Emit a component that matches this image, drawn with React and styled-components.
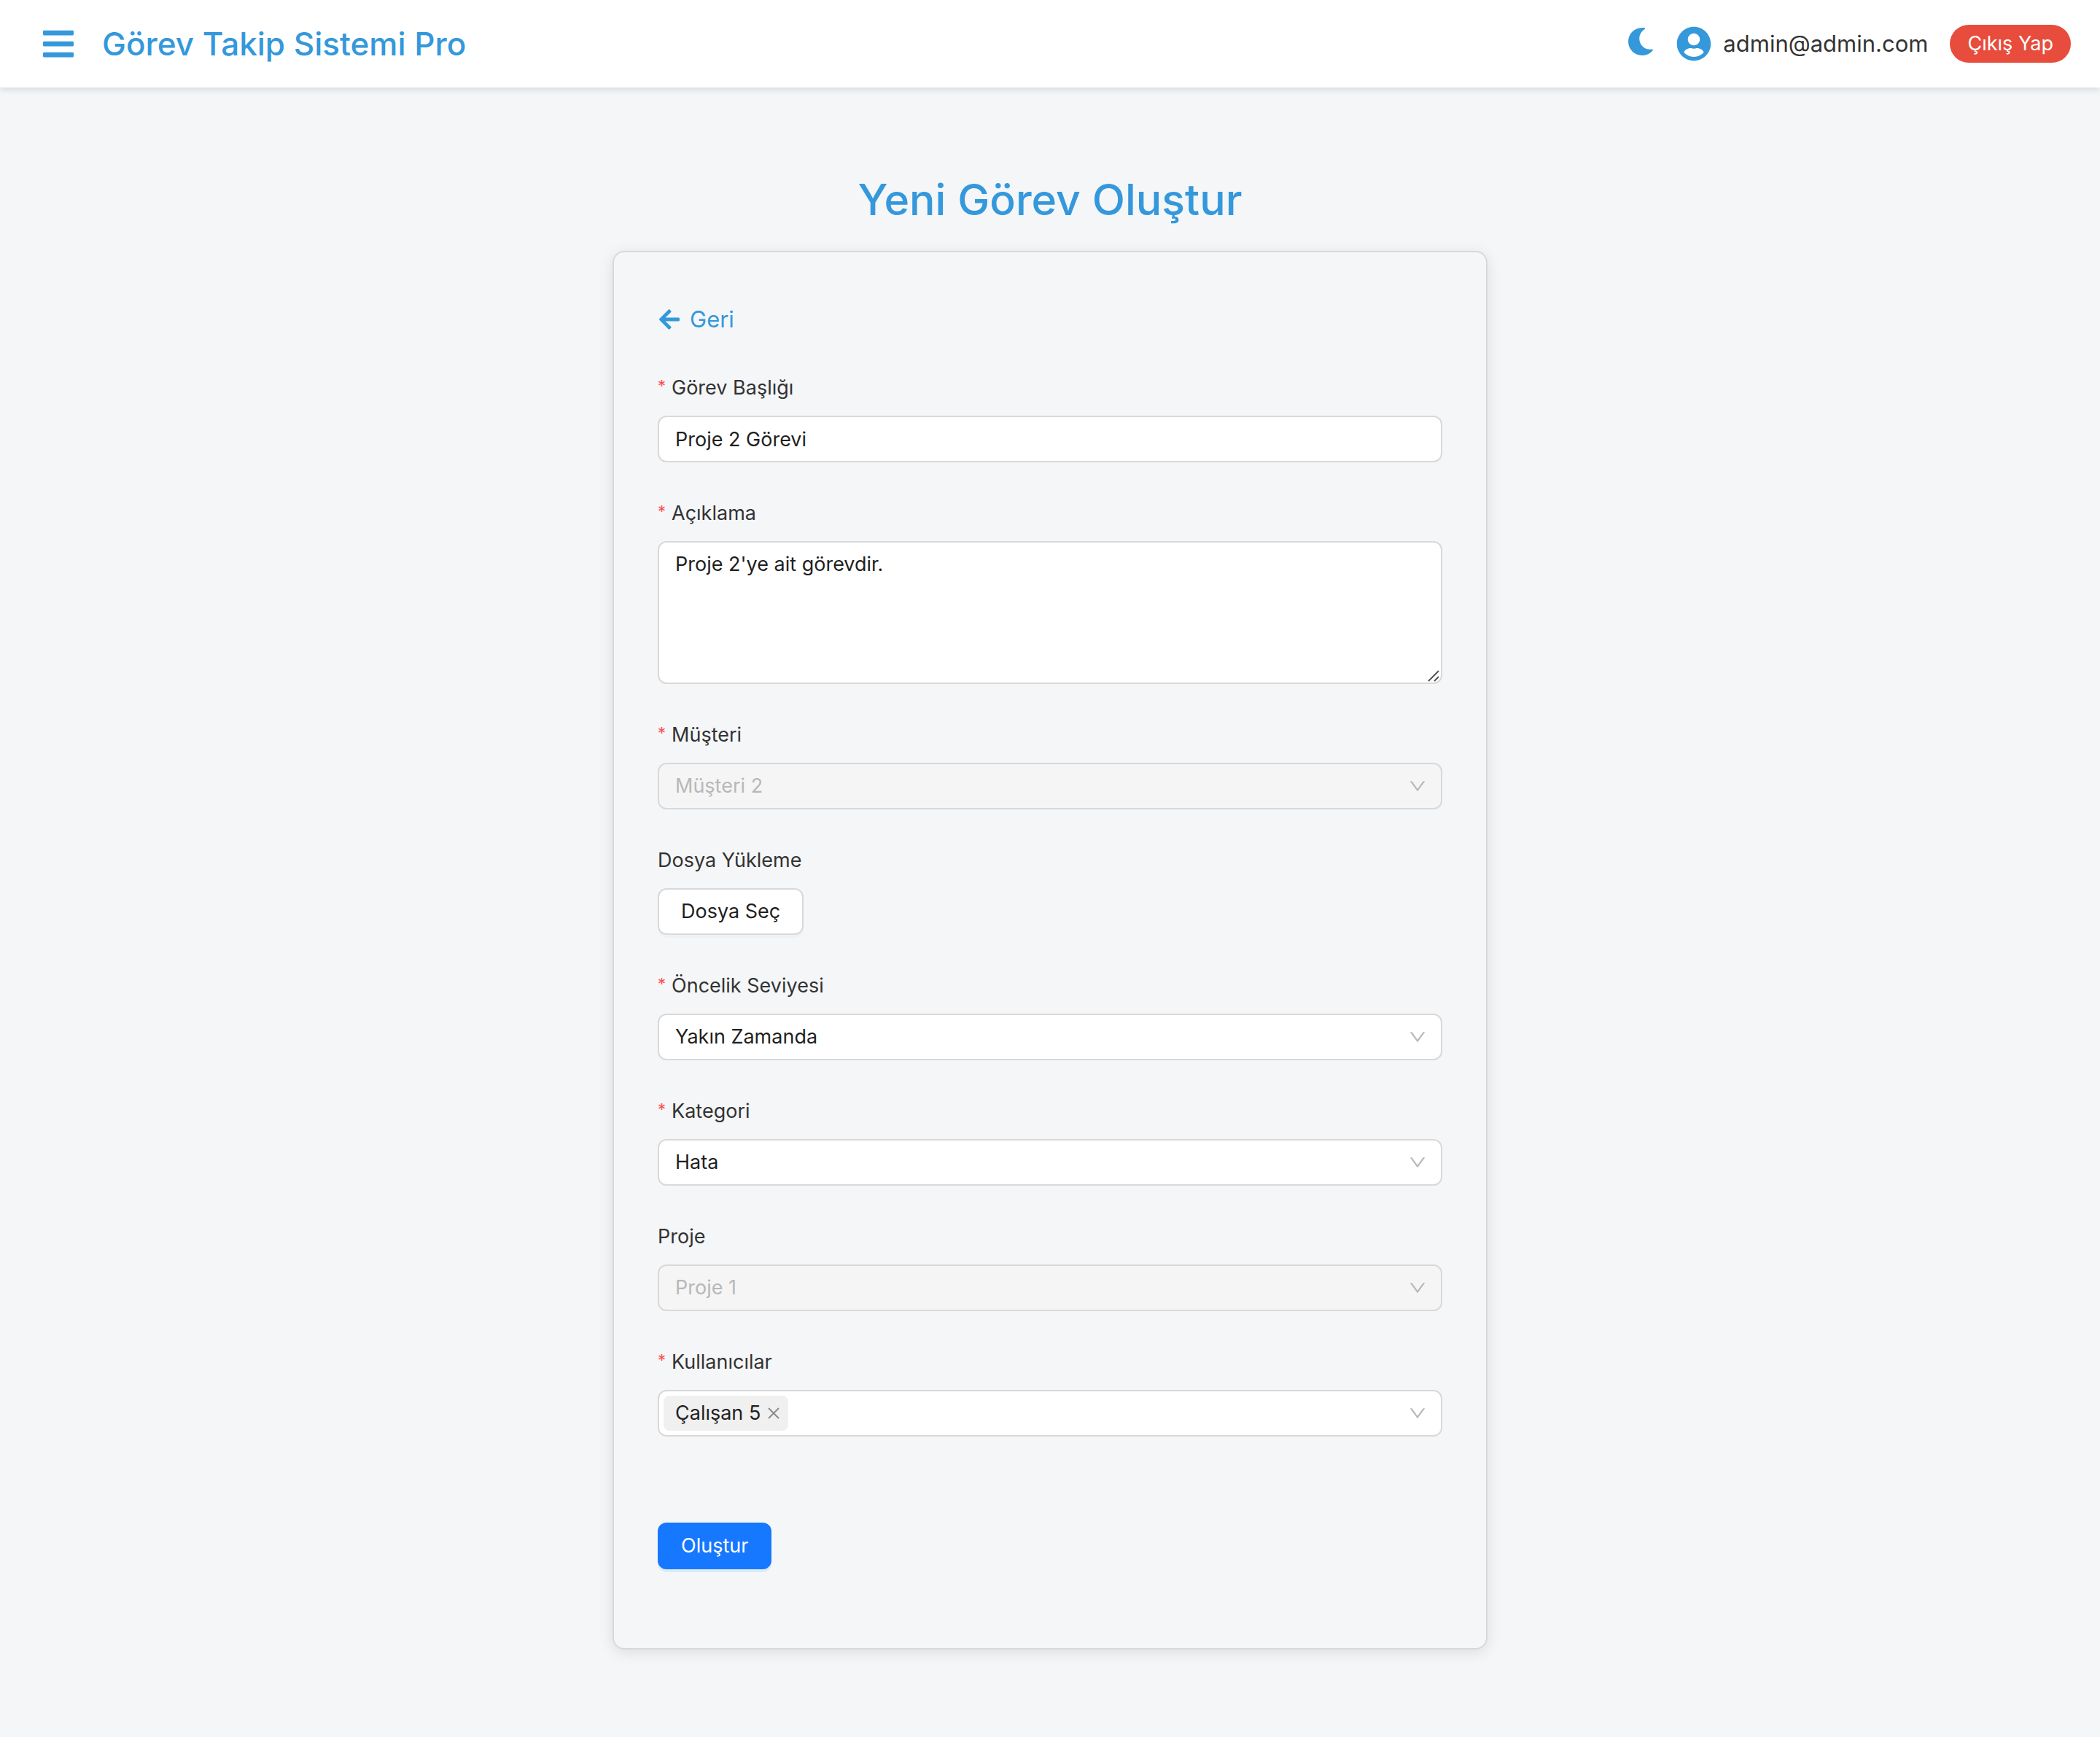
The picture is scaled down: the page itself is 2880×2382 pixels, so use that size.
import React, { useState } from "react";
import styled, { createGlobalStyle } from "styled-components";
import { FaArrowLeft, FaBars, FaMoon, FaUserCircle } from "react-icons/fa";

const GlobalStyle = createGlobalStyle`
  *, *::before, *::after { box-sizing: border-box; }
  body {
    margin: 0;
    min-height: 100vh;
    background: #f4f6f8;
    color: #333;
    font-family: Inter, "Noto Sans", sans-serif;
    font-size: 27px;
    line-height: 44px;
  }
  button, input, select, textarea { font: inherit; }
`;

const Header = styled.header`
  display: flex;
  align-items: center;
  justify-content: space-between;
  height: 120px;
  padding: 0 40px 0 56px;
  background: #fff;
  box-shadow: 0 4px 8px rgba(0, 0, 0, 0.1);
`;

const Brand = styled.div`
  display: flex;
  align-items: center;
  gap: 36px;
  color: #3498db;
`;

const BrandName = styled.span`
  font-size: 44px;
  line-height: 60px;
  font-weight: 500;
`;

const IconButton = styled.button`
  display: flex;
  padding: 0;
  border: 0;
  background: none;
  color: #3498db;
  font-size: ${(p) => p.$size}px;
  cursor: pointer;
`;

const ThemeToggle = styled(IconButton)`
  align-items: flex-start;
  height: 44px;
`;

const Account = styled.div`
  display: flex;
  align-items: center;
  gap: 30px;
`;

const User = styled.div`
  display: flex;
  align-items: center;
  gap: 16px;
  font-size: 31px;

  svg {
    color: #3498db;
    font-size: 48px;
  }
`;

const LogoutButton = styled.button`
  height: 52px;
  padding: 0 24px;
  border: 0;
  border-radius: 26px;
  background: #e74c3c;
  color: #fff;
  cursor: pointer;
`;

const Main = styled.main`
  display: flex;
  flex-direction: column;
  align-items: center;
  padding: 114px 40px 120px;
`;

const PageTitle = styled.h1`
  margin: 0 0 30px;
  color: #3498db;
  font-size: 59px;
  line-height: 80px;
  font-weight: 500;
`;

const Card = styled.form`
  width: 100%;
  max-width: 1200px;
  padding: 60px;
  border: 2px solid #d9d9d9;
  border-radius: 16px;
  box-shadow: 0 4px 20px rgba(0, 0, 0, 0.1);
`;

const BackLink = styled.a`
  display: inline-flex;
  align-items: center;
  gap: 12px;
  height: 64px;
  margin-bottom: 40px;
  color: #3498db;
  font-size: 31px;
  text-decoration: none;

  svg {
    font-size: 32px;
  }
`;

const Field = styled.div`
  display: flex;
  flex-direction: column;
  align-items: flex-start;
  gap: 16px;
  margin-bottom: 48px;
`;

const Label = styled.label`
  display: flex;
  gap: 8px;
`;

const Required = styled.span`
  color: #ff4d4f;
  font-size: 22px;
  line-height: 38px;
`;

const controlBox = `
  width: 100%;
  border: 2px solid #d9d9d9;
  border-radius: 12px;
  background: #fff;
  color: #1f1f1f;
  outline: none;
`;

const TextInput = styled.input`
  ${controlBox}
  height: 64px;
  padding: 0 22px;
`;

const TextArea = styled.textarea`
  ${controlBox}
  display: block;
  height: 196px;
  padding: 8px 22px;
  resize: none;
`;

const ControlWrap = styled.div`
  position: relative;
  width: 100%;
`;

const Select = styled.select`
  ${controlBox}
  display: block;
  height: 64px;
  padding: 0 60px 0 22px;
  appearance: none;

  &:disabled {
    background: #f5f5f5;
    color: #b8b8b8;
    opacity: 1;
  }
`;

const Chevron = styled.svg`
  position: absolute;
  top: 20px;
  right: 22px;
  width: 24px;
  height: 24px;
  fill: #b8b8b8;
  pointer-events: none;
`;

const ResizeGrip = styled.svg`
  position: absolute;
  right: 4px;
  bottom: 3px;
  width: 16px;
  height: 16px;
  stroke: #555;
  stroke-width: 2;
  pointer-events: none;
`;

const TagBox = styled.div`
  ${controlBox}
  display: flex;
  align-items: center;
  height: 64px;
  padding: 0 60px 0 6px;
`;

const Tag = styled.span`
  display: flex;
  align-items: center;
  gap: 8px;
  height: 48px;
  padding: 0 10px 0 16px;
  border-radius: 8px;
  background: #f0f0f0;
`;

const TagRemove = styled.button`
  display: flex;
  padding: 0;
  border: 0;
  background: none;
  cursor: pointer;

  svg {
    width: 20px;
    height: 20px;
    stroke: #8c8c8c;
    stroke-width: 2;
  }
`;

const TagSearch = styled.input`
  flex: 1;
  min-width: 0;
  border: 0;
  background: none;
  outline: none;
`;

const Button = styled.button`
  height: 64px;
  padding: 0 30px;
  border: 2px solid ${(p) => (p.$primary ? "#1677ff" : "#d9d9d9")};
  border-radius: 12px;
  background: ${(p) => (p.$primary ? "#1677ff" : "#fff")};
  color: ${(p) => (p.$primary ? "#fff" : "#1f1f1f")};
  box-shadow: 0 4px 0 ${(p) => (p.$primary ? "rgba(5, 145, 255, 0.1)" : "rgba(0, 0, 0, 0.02)")};
  cursor: pointer;
`;

const Actions = styled.div`
  padding: 70px 0 48px;
`;

function DownIcon() {
  return (
    <Chevron viewBox="64 64 896 896" aria-hidden="true">
      <path d="M884 256h-75c-5.1 0-9.9 2.5-12.9 6.6L512 654.2 227.9 262.6c-3-4.1-7.8-6.6-12.9-6.6h-75c-6.5 0-10.3 7.4-6.5 12.7l352.6 486.1c12.8 17.6 39 17.6 51.7 0l352.6-486.1c3.9-5.3.1-12.7-6.4-12.7z" />
    </Chevron>
  );
}

function FormField({ id, label, required, children }) {
  return (
    <Field>
      <Label htmlFor={id}>
        {required && <Required aria-hidden="true">*</Required>}
        {label}
      </Label>
      {children}
    </Field>
  );
}

function SelectField({ id, label, required, disabled, options }) {
  return (
    <FormField id={id} label={label} required={required}>
      <ControlWrap>
        <Select id={id} disabled={disabled} required={required}>
          {options.map((option) => (
            <option key={option}>{option}</option>
          ))}
        </Select>
        <DownIcon />
      </ControlWrap>
    </FormField>
  );
}

export default function App() {
  const [users, setUsers] = useState(["Çalışan 5"]);

  return (
    <>
      <GlobalStyle />
      <Header>
        <Brand>
          <IconButton type="button" $size={48} aria-label="Menü">
            <FaBars />
          </IconButton>
          <BrandName>Görev Takip Sistemi Pro</BrandName>
        </Brand>
        <Account>
          <ThemeToggle type="button" $size={38} aria-label="Koyu tema">
            <FaMoon />
          </ThemeToggle>
          <User>
            <FaUserCircle />
            <span>admin@admin.com</span>
          </User>
          <LogoutButton type="button">Çıkış Yap</LogoutButton>
        </Account>
      </Header>

      <Main>
        <PageTitle>Yeni Görev Oluştur</PageTitle>
        <Card onSubmit={(event) => event.preventDefault()}>
          <BackLink href="#">
            <FaArrowLeft />
            Geri
          </BackLink>

          <FormField id="title" label="Görev Başlığı" required>
            <TextInput id="title" defaultValue="Proje 2 Görevi" />
          </FormField>

          <FormField id="description" label="Açıklama" required>
            <ControlWrap>
              <TextArea id="description" defaultValue="Proje 2'ye ait görevdir." />
              <ResizeGrip viewBox="0 0 16 16" aria-hidden="true">
                <path d="M1 15L15 1M9 15L15 9" />
              </ResizeGrip>
            </ControlWrap>
          </FormField>

          <SelectField id="customer" label="Müşteri" required disabled options={["Müşteri 2"]} />

          <FormField id="file" label="Dosya Yükleme">
            <Button id="file" type="button">Dosya Seç</Button>
          </FormField>

          <SelectField id="priority" label="Öncelik Seviyesi" required options={["Yakın Zamanda"]} />
          <SelectField id="category" label="Kategori" required options={["Hata"]} />
          <SelectField id="project" label="Proje" disabled options={["Proje 1"]} />

          <FormField id="users" label="Kullanıcılar" required>
            <ControlWrap>
              <TagBox>
                {users.map((user) => (
                  <Tag key={user}>
                    {user}
                    <TagRemove
                      type="button"
                      aria-label={`${user} kaldır`}
                      onClick={() => setUsers(users.filter((other) => other !== user))}
                    >
                      <svg viewBox="0 0 20 20">
                        <path d="M3 3L17 17M17 3L3 17" />
                      </svg>
                    </TagRemove>
                  </Tag>
                ))}
                <TagSearch id="users" />
              </TagBox>
              <DownIcon />
            </ControlWrap>
          </FormField>

          <Actions>
            <Button type="submit" $primary>Oluştur</Button>
          </Actions>
        </Card>
      </Main>
    </>
  );
}
